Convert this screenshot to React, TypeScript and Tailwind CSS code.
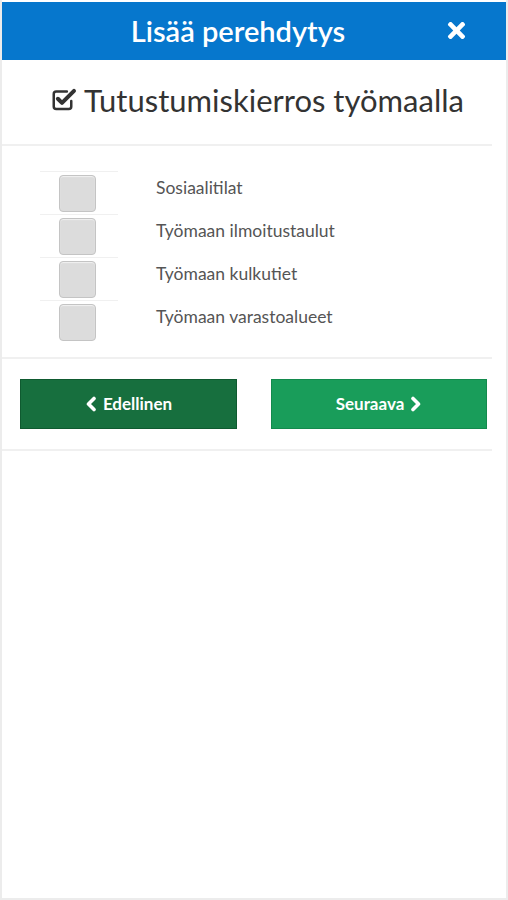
import { FaTimes } from "react-icons/fa";

const items = [
  "Sosiaalitilat",
  "Työmaan ilmoitustaulut",
  "Työmaan kulkutiet",
  "Työmaan varastoalueet",
];

// FA4-style check-square-o
const CheckSquare = () => (
  <svg width="30" height="30" viewBox="0 0 24 24" className="text-[#333] -mt-[2px]">
    <path
      d="M17 13.5V18a2 2 0 0 1-2 2H5a2 2 0 0 1-2-2V8a2 2 0 0 1 2-2h8.5"
      fill="none"
      stroke="currentColor"
      strokeWidth="2"
      strokeLinecap="round"
    />
    <path
      d="M6.3 11.8 9.6 15.1 19.2 5.5"
      fill="none"
      stroke="currentColor"
      strokeWidth="3.2"
      strokeLinecap="round"
      strokeLinejoin="round"
    />
  </svg>
);

const Chevron = ({ dir }: { dir: "left" | "right" }) => (
  <svg width="12" height="16" viewBox="0 0 12 16">
    <path
      d={dir === "left" ? "M9 2.5 3.5 8 9 13.5" : "M3 2.5 8.5 8 3 13.5"}
      fill="none"
      stroke="currentColor"
      strokeWidth="3.6"
      strokeLinecap="round"
      strokeLinejoin="round"
    />
  </svg>
);

export default function App() {
  return (
    <div
      className="h-[900px] w-[508px] bg-white border-2 border-t-0 border-[#ececec] flex flex-col"
      style={{ fontFamily: "Lato, 'Open Sans', sans-serif" }}
    >
      {/* header */}
      <div className="mt-[2px] h-[58px] bg-[#0677cd] flex items-center relative">
        <h1 className="w-full text-center text-white text-[29px] font-semibold pr-[32px]">
          Lisää perehdytys
        </h1>
        <button className="absolute right-[37px] top-[16px] text-white">
          <FaTimes size={25} />
        </button>
      </div>

      <div className="pr-[14px]">
        <div className="h-[86px] flex items-center justify-center gap-[4px] border-b-2 border-[#f0f0f0] pl-[20px] pb-[4px]">
          <CheckSquare />
          <span className="text-[31px] text-[#333]">Tutustumiskierros työmaalla</span>
        </div>

        <div className="pt-[25px] pb-[14px] border-b-2 border-[#f0f0f0]">
          {items.map((item) => (
            <div key={item} className="flex items-center h-[43px]">
              <div className="ml-[38px] w-[78px] h-full border-t border-[#f0f0f0] flex items-center justify-center">
                <div className="w-[37px] h-[37px] rounded-[4px] bg-[#dcdcdc] border border-[#c4c4c4] shadow-[inset_0_1px_1px_rgba(255,255,255,0.6)] mr-[3px]" />
              </div>
              <span className="ml-[38px] text-[17.5px] text-[#555] -mt-[8px]">{item}</span>
            </div>
          ))}
        </div>

        <div className="flex justify-between pl-[18px] pr-[5px] pt-[20px] pb-[20px] border-b-2 border-[#f0f0f0]">
          <button className="w-[217px] h-[50px] bg-[#176f3e] border border-[#0f5a30] text-white text-[17px] font-bold flex items-center justify-center gap-[6px]">
            <Chevron dir="left" />
            Edellinen
          </button>
          <button className="w-[216px] h-[50px] bg-[#199d5a] border border-[#138a4d] text-white text-[17px] font-bold flex items-center justify-center gap-[6px]">
            Seuraava
            <Chevron dir="right" />
          </button>
        </div>
      </div>

      <div className="flex-1" />
    </div>
  );
}
